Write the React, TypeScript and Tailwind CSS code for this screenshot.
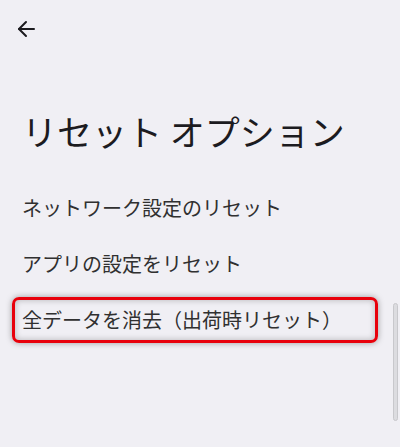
import React from "react";

const items = [
  "ネットワーク設定のリセット",
  "アプリの設定をリセット",
  "全データを消去（出荷時リセット）",
];

export default function App() {
  return (
    <div
      className="relative w-[400px] h-[447px] overflow-hidden bg-[#f0eff4] text-[#1c1b1f]"
      style={{ fontFamily: '"Noto Sans CJK JP", "Noto Sans", sans-serif' }}
    >
      {/* Top bar */}
      <div className="h-[58px] pl-[14px] pt-[17px]">
        <svg width="24" height="24" viewBox="0 0 24 24" fill="none" stroke="#1c1b1f" strokeWidth="2" strokeLinecap="round" strokeLinejoin="round">
          <path d="M20 12H5" />
          <path d="M12 5l-7 7 7 7" />
        </svg>
      </div>

      {/* Title */}
      <h1 className="pl-[22px] mt-[52px] text-[35px] leading-[42px] font-normal">
        リセット オプション
      </h1>

      {/* Options */}
      <div className="mt-[28px] flex flex-col">
        {items.map((label, i) => (
          <div key={label} className="h-[56px] flex items-center pl-[22px] text-[20px] text-[#303030]">
            {i === 2 ? (
              <div className="-ml-[10px] w-[366px] h-[46px] flex items-center pl-[7px] border-[3px] border-[#e8000b] rounded-[7px] shadow-[0_0_6px_rgba(0,0,0,0.35),inset_0_0_6px_rgba(0,0,0,0.25)]">
                {label}
              </div>
            ) : (
              label
            )}
          </div>
        ))}
      </div>

      {/* Scrollbar */}
      <div className="absolute right-[2px] top-[303px] w-[5px] h-[118px] rounded-full bg-[#dcdce0] border border-[#c8c8cc]" />
    </div>
  );
}
